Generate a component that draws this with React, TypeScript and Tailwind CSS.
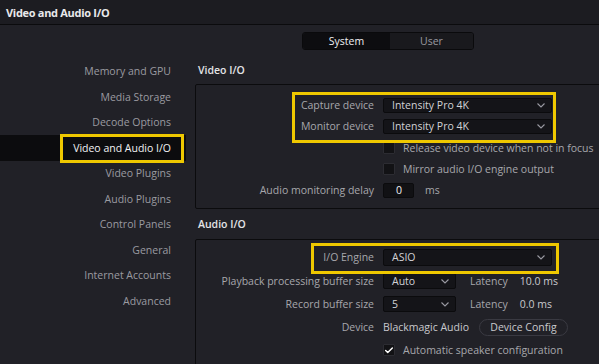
import { Check } from 'lucide-react'

const navItems = [
  'Memory and GPU',
  'Media Storage',
  'Decode Options',
  'Video and Audio I/O',
  'Video Plugins',
  'Audio Plugins',
  'Control Panels',
  'General',
  'Internet Accounts',
  'Advanced',
]

const Chevron = () => (
  <svg width="8" height="5" viewBox="0 0 8 5" className="shrink-0">
    <path d="M0.5 0.5 L4 4 L7.5 0.5" fill="none" stroke="#9a9aa2" strokeWidth="1.1" />
  </svg>
)

interface SelectProps {
  value: string
  width: string
  height?: string
}

const Select = ({ value, width, height = 'h-[15px]' }: SelectProps) => (
  <div
    className={`${width} ${height} flex items-center justify-between rounded-[2px] border border-[#0b0b0d] bg-[#141418] pl-[8px] pr-[6px] text-[#d2d2d6]`}
  >
    <span>{value}</span>
    <Chevron />
  </div>
)

const Checkbox = ({ checked = false }: { checked?: boolean }) => (
  <div className="flex h-[12px] w-[12px] shrink-0 items-center justify-center rounded-[1px] border border-[#2c2c32] bg-[#121215]">
    {checked && <Check size={11} strokeWidth={3.5} className="text-white" />}
  </div>
)

const Row = ({ label, h, children }: { label?: string; h: string; children: React.ReactNode }) => (
  <div className={`flex ${h} items-center`}>
    <div className="w-[178px] shrink-0 text-right text-[#a7a7ac]">{label}</div>
    <div className="ml-[9px] flex items-center">{children}</div>
  </div>
)

export default function App() {
  return (
    <div className="relative h-[364px] w-[599px] overflow-hidden whitespace-nowrap bg-[#212127] font-['Open_Sans',sans-serif] text-[10.5px] leading-none">
      {/* Title bar */}
      <div className="flex h-[25px] items-center border-b border-[#0b0b0d] bg-[#1c1c21] pl-[6px] text-[11px] font-bold tracking-[-0.3px] text-[#e9e9eb]">
        Video and Audio I/O
      </div>

      {/* System / User toggle */}
      <div className="mt-[7px] flex pl-[302px]">
        <div className="flex h-[18px] w-[172px] overflow-hidden rounded-[3px] border border-[#0a0a0c]">
          <div className="flex w-[87px] items-center justify-center bg-[#0d0d10] text-[#f0f0f2]">System</div>
          <div className="flex flex-1 items-center justify-center bg-[#19191d] text-[#9a9aa0]">User</div>
        </div>
      </div>

      <div className="mt-[8px] flex">
        {/* Sidebar */}
        <div className="w-[186px] shrink-0 pt-[0.5px]">
          {navItems.map((item) => {
            const active = item === 'Video and Audio I/O'
            return (
              <div
                key={item}
                className={`flex h-[25.5px] items-center justify-end pr-[15px] ${
                  active ? 'bg-[#0c0c0e] text-[#f2f2f4]' : 'text-[#9b9ba1]'
                }`}
              >
                {item}
              </div>
            )
          })}
        </div>

        {/* Content */}
        <div className="ml-[9px] w-[420px] shrink-0">
          <div className="flex h-[26px] items-center pl-[3px] pb-[1px] font-semibold text-[#e4e4e6]">Video I/O</div>
          <div className="h-[125px] rounded-[2px] border border-[#0b0b0d] pt-[10px]">
            <Row label="Capture device" h="h-[20px]">
              <Select value="Intensity Pro 4K" width="w-[169px]" />
            </Row>
            <Row label="Monitor device" h="h-[22px]">
              <Select value="Intensity Pro 4K" width="w-[169px]" />
            </Row>
            <Row h="h-[22px]">
              <Checkbox />
              <span className="ml-[8px] text-[#a7a7ac]">Release video device when not in focus</span>
            </Row>
            <Row h="h-[20px]">
              <Checkbox />
              <span className="ml-[8px] text-[#a7a7ac]">Mirror audio I/O engine output</span>
            </Row>
            <Row label="Audio monitoring delay" h="h-[22px]">
              <div className="flex h-[15px] w-[31px] items-center rounded-[2px] border border-[#0b0b0d] bg-[#111114] pl-[12px] text-[#f0f0f2]">
                0
              </div>
              <span className="ml-[11px] text-[#a7a7ac]">ms</span>
            </Row>
          </div>

          <div className="flex h-[30px] items-center pl-[3px] font-semibold text-[#e4e4e6]">Audio I/O</div>
          <div className="h-[140px] rounded-[2px] border border-[#0b0b0d] pt-[5px]">
            <Row label="I/O Engine" h="h-[24px]">
              <Select value="ASIO" width="w-[169px]" height="h-[17px]" />
            </Row>
            <Row label="Playback processing buffer size" h="h-[24px]">
              <Select value="Auto" width="w-[73px]" height="h-[16px]" />
              <span className="ml-[14px] text-[#a7a7ac]">Latency</span>
              <span className="ml-[12px] text-[#c9c9cd]">10.0 ms</span>
            </Row>
            <Row label="Record buffer size" h="h-[22px]">
              <Select value="5" width="w-[73px]" height="h-[16px]" />
              <span className="ml-[14px] text-[#a7a7ac]">Latency</span>
              <span className="ml-[12px] text-[#c9c9cd]">0.0 ms</span>
            </Row>
            <Row label="Device" h="h-[24px]">
              <span className="text-[#c9c9cd]">Blackmagic Audio</span>
              <div className="ml-[10px] flex h-[17px] w-[89px] items-center justify-center rounded-full border border-[#3a3a42] text-[#c9c9cd]">
                Device Config
              </div>
            </Row>
            <Row h="h-[22px]">
              <Checkbox checked />
              <span className="ml-[8px] text-[#a7a7ac]">Automatic speaker configuration</span>
            </Row>
          </div>
        </div>
      </div>

      {/* Highlight annotations */}
      <div className="pointer-events-none absolute left-[60px] top-[134px] h-[29px] w-[124px] border-[3px] border-[#efc800]" />
      <div className="pointer-events-none absolute left-[292px] top-[92px] h-[51px] w-[264px] border-[3px] border-[#efc800]" />
      <div className="pointer-events-none absolute left-[311px] top-[243px] h-[31px] w-[248px] border-[3px] border-[#efc800]" />
    </div>
  )
}
